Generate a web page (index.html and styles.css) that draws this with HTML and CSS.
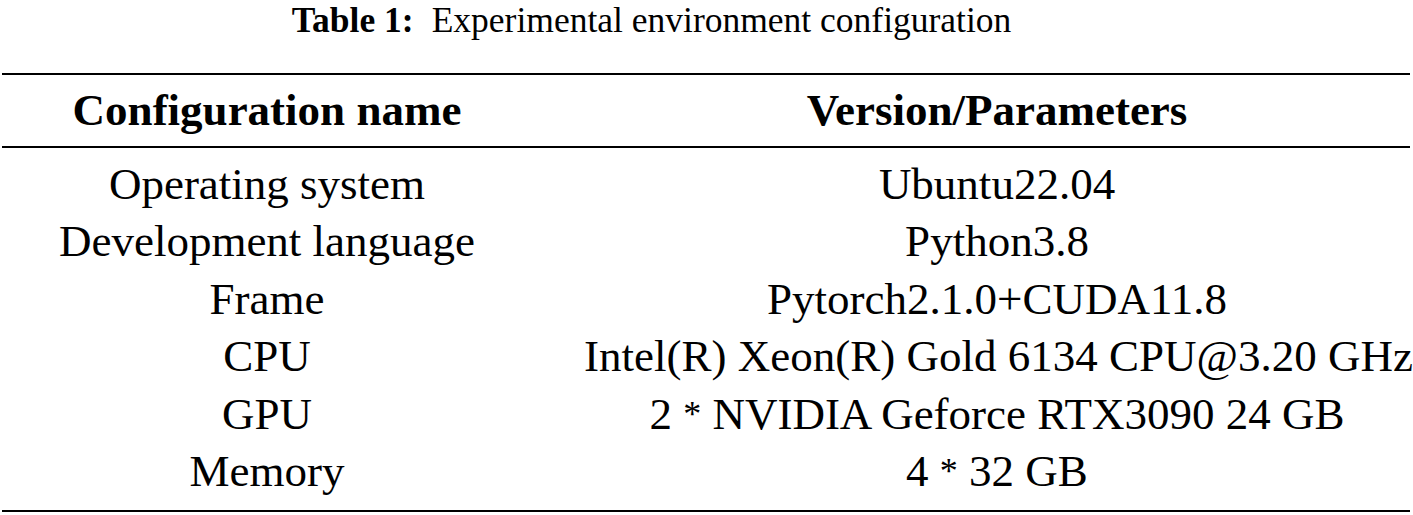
FILE: index.html
```html
<!DOCTYPE html>
<html lang="en">
<head>
<meta charset="utf-8">
<title>Table 1</title>
<link rel="stylesheet" href="styles.css">
</head>
<body>
<div class="page">
  <div class="caption"><span class="label">Table 1:</span><span class="title">Experimental environment configuration</span></div>
  <div class="table">
    <div class="row head">
      <div class="cell c1">Configuration name</div>
      <div class="cell c2">Version/Parameters</div>
    </div>
    <div class="body">
      <div class="row">
        <div class="cell c1">Operating system</div>
        <div class="cell c2">Ubuntu22.04</div>
      </div>
      <div class="row">
        <div class="cell c1">Development language</div>
        <div class="cell c2">Python3.8</div>
      </div>
      <div class="row">
        <div class="cell c1">Frame</div>
        <div class="cell c2">Pytorch2.1.0+CUDA11.8</div>
      </div>
      <div class="row">
        <div class="cell c1">CPU</div>
        <div class="cell c2">Intel(R) Xeon(R) Gold 6134 CPU@3.20 GHz</div>
      </div>
      <div class="row">
        <div class="cell c1">GPU</div>
        <div class="cell c2">2&nbsp;<span class="ast">*</span>&nbsp;NVIDIA Geforce RTX3090 24 GB</div>
      </div>
      <div class="row">
        <div class="cell c1">Memory</div>
        <div class="cell c2">4&nbsp;<span class="ast">*</span>&nbsp;32 GB</div>
      </div>
    </div>
  </div>
</div>
</body>
</html>
```

FILE: styles.css
```css
html, body {
  margin: 0;
  padding: 0;
  background: #ffffff;
}

body {
  font-family: "Liberation Serif", "Times New Roman", serif;
  color: #000000;
}

.page {
  width: 1413px;
}

.caption {
  display: flex;
  justify-content: center;
  font-size: 35.5px;
  line-height: 40px;
  padding-right: 110px;
  white-space: nowrap;
}

.caption .label {
  font-weight: bold;
  margin-right: 18px;
}

.table {
  margin: 33px 3px 0 2px;
  border-top: 2.5px solid #000;
  border-bottom: 2.5px solid #000;
}

.row {
  display: grid;
  grid-template-columns: 530px 1fr;
  font-size: 45px;
  line-height: 57.5px;
  white-space: nowrap;
}

.row.head {
  font-weight: bold;
  padding: 7px 0 6px;
  border-bottom: 2.5px solid #000;
}

.body {
  padding: 8px 0 9px;
}

.cell {
  display: flex;
  justify-content: center;
}

.c2 {
  padding-left: 52px;
}

.ast {
  font-size: 36px;
  vertical-align: -6px;
}
```
